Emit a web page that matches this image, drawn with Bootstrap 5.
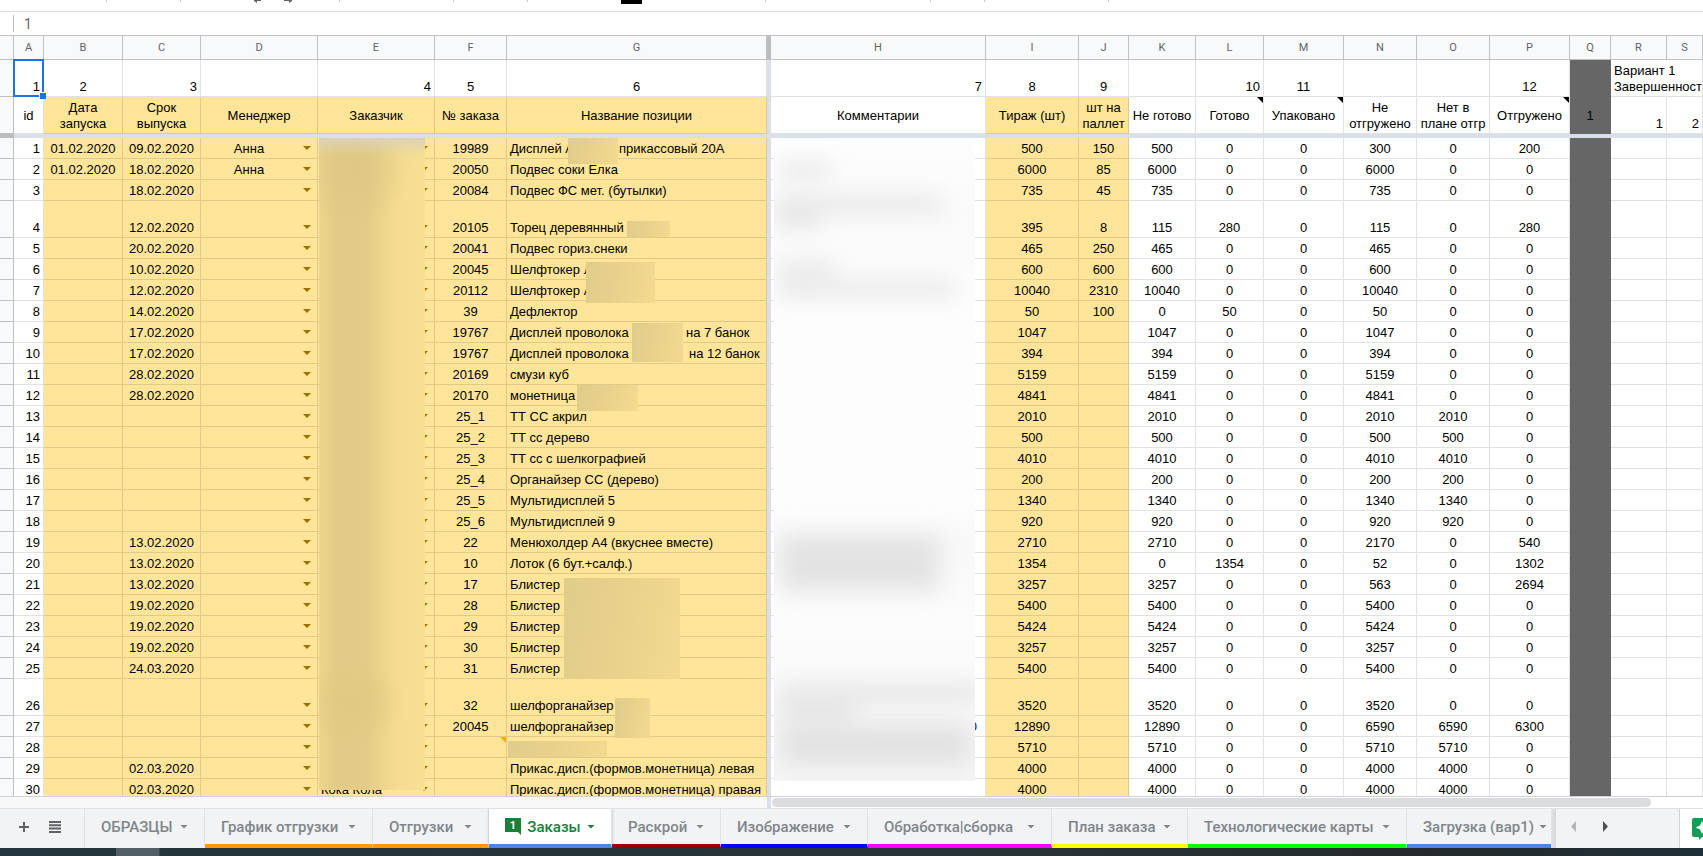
<!DOCTYPE html>
<html lang="ru">
<head>
<meta charset="utf-8">
<meta name="viewport" content="width=device-width, initial-scale=1">
<title>Заказы</title>
<link href="https://cdn.jsdelivr.net/npm/bootstrap@5.3.0/dist/css/bootstrap.min.css" rel="stylesheet">
<style>
  body { font: 13px/16px "Liberation Sans", Arial, sans-serif; color: #000; background: #fff; }
  button { font: inherit; color: inherit; background: none; border: 0; padding: 0; }

  .toolbar { height: 12px; border-bottom: 1px solid #dadce0; }
  .tool-group { flex: none; position: relative; }
  .tool-group::after { content: ""; position: absolute; right: 0; top: 0; width: 1px; height: 2px; background: #c8cbd0; }
  .text-swatch { width: 21px; height: 4px; background: #000; margin-left: 93px; }
  .formula-bar { height: 24px; border-bottom: 1px solid #c0c0c0; }
  .formula-bar input { border: 0; border-left: 1px solid #c0c0c0; height: 17px; margin-left: 13px; padding: 0 0 0 10px; outline: 0; font: 14px/16px Roboto, sans-serif; color: #666; }

  .grid-area { min-height: 0; border-bottom: 1px solid #cfd1d4; }
  .sheet { table-layout: fixed; border-collapse: separate; border-spacing: 0; width: 100%; }
  .sheet td, .sheet th { border-right: 1px solid #e1e1e1; border-bottom: 1px solid #e1e1e1; padding: 3px 3px 1px; vertical-align: bottom; text-align: center; font-weight: 400; height: 21px; white-space: nowrap; position: relative; }
  .sheet thead th { height: 24px; padding: 0; background: #f8f9fa; color: #5f6368; border-color: #c0c0c0; font: 11px/23px Roboto, sans-serif; vertical-align: middle; }
  .sheet .row-head { background: #f8f9fa; border-color: #c0c0c0; padding: 0; }
  .sheet tr.tall > * { height: 37px; }
  .sheet tr.titles td { vertical-align: middle; white-space: normal; }
  .sheet tr.titles td.to-end { vertical-align: bottom; }
  .sheet .to-end { text-align: right; }
  .sheet .to-start { text-align: left; }
  .sheet .due { padding-right: 6px; }
  .sheet .remark-tail { padding-right: 8px; color: #00006a; }
  .sheet .tint { background: #ffe599; border-color: #e0ca87; }
  .sheet .dark { background: #666; border-color: #666; }
  .sheet .over { overflow: visible; white-space: nowrap; border-right-color: #fff; }
  .sheet .gap { background: #dadfe8; border: 0; padding: 0; }
  .sheet thead .gap, .sheet .split .row-head { background: #bcbcbc; }
  .sheet thead .gap { border-bottom: 1px solid #c0c0c0; }
  .sheet .split > * { height: 4px; padding: 0; border: 0; background: #dadfe8; }
  .cell-menu { position: absolute; right: 6px; bottom: 8px; width: 8px; height: 4px; background: #997300; clip-path: polygon(0 0, 100% 0, 50% 100%); }
  .sheet .has-menu { padding-right: 23px; }
  .note::after { content: ""; position: absolute; right: 0; top: 0; border-top: 6px solid #000; border-left: 6px solid transparent; }
  .note-amber::after { border-top-color: #f9ab00; }
  .picked { position: absolute; inset: -1px -1px -1px -1px; border: 2px solid #1a73e8; z-index: 3; }
  .picked::after { content: ""; position: absolute; right: -4px; bottom: -4px; width: 7px; height: 7px; background: #1a73e8; border: 1px solid #fff; border-width: 1px 0 0 1px; }
  .piece { display: inline-block; vertical-align: bottom; }

  .veil { position: absolute; z-index: 2; background: linear-gradient(100deg, #e2cc8a, #e6d08b 40%, #f3da91); }
  .veil-client { left: 1px; top: 0; width: 106px; height: 652px; background:
    linear-gradient(180deg, #dcd2b4 0, transparent 18px),
    radial-gradient(ellipse 50px 40px at 34px 565px, #e0c983, transparent),
    radial-gradient(ellipse 54px 60px at 36px 30px, #dec884, transparent),
    linear-gradient(90deg, #ecd48c 0, #e2cb86 18px, #e3cc87 48px, #f4db91 76px, #f8df94 100%); }
  .veil-remark { left: 3px; top: 5px; width: 201px; height: 638px; overflow: hidden; background: linear-gradient(180deg, #fdfdfd, #fafafa 70px, #fdfdfd 190px, #fdfdfd 360px, #f8f8f8 400px, #fcfcfc 480px, #f5f5f5); }
  .veil-remark i { position: absolute; background: #dcdcdc; filter: blur(11px); opacity: .75; }

  .scroll-strip { height: 11px; flex: none; }
  .scroll-left { width: 767px; background: #f8f8f8; }
  .scroll-gap { width: 4px; background: #dadfe8; }
  .scroll-thumb { height: 9px; margin: 1px 52px 0 1px; border-radius: 5px; background: #dadce0; }

  .tab-bar { height: 40px; flex: none; background: #f1f3f4; border-top: 1px solid #e0e2e4; color: #80868b; font: 500 15px/20px Roboto, sans-serif; }
  .tab-tools { width: 85px; flex: none; border-right: 1px solid #e0e2e4; padding: 0 0 3px 18px; gap: 11px; color: #5f6368; }
  .sheet-tab { flex: none; padding: 0 16px; border-right: 1px solid #e0e2e4; border-bottom: 4px solid transparent; color: #80868b; text-decoration: none; white-space: nowrap; }
  .sheet-tab.current { background: #fff; color: #188038; box-shadow: 0 0 3px #bbb; }
  .tab-arrow { width: 8px; height: 4px; background: currentColor; clip-path: polygon(0 0, 100% 0, 50% 100%); }
  .tab-edge { width: 5px; background: linear-gradient(90deg, #e2e4e6, #d5d7d9); }
  .tab-scroll { gap: 22px; width: 124px; padding: 0 0 3px 15px; border-right: 1px solid #d0d2d4; }
  .explore { width: 23px; background: #fff; overflow: hidden; padding-left: 12px; }
  .taskbar { height: 8px; flex: none; background: linear-gradient(90deg, #24353d, #283338 60%, #252a2c 83%, #1f2f37); }
  .task-active { width: 44px; margin-left: 116px; background: #535f66; border-right: 1px solid #3c484e; }
</style>
</head>
<body class="vh-100 d-flex flex-column overflow-hidden">
  <div class="toolbar d-flex flex-shrink-0 overflow-hidden">
    <div class="tool-group" style="width:107px"></div>
    <div class="tool-group" style="width:74px"></div>
    <div class="tool-group" style="width:159px">
      <svg class="d-block" width="150" height="4" fill="#5f6368"><path d="M73 0h7v1h-4v2l-3-2zM103 0h8v1l-3 2V1h-5z"/></svg>
    </div>
    <div class="tool-group" style="width:114px"></div>
    <div class="tool-group" style="width:74px"></div>
    <div class="tool-group" style="width:238px"><div class="text-swatch"></div></div>
    <div class="tool-group" style="width:165px"></div>
    <div class="tool-group" style="width:54px"></div>
    <div class="tool-group" style="width:124px"></div>
  </div>
  <div class="formula-bar d-flex align-items-center flex-shrink-0">
    <input class="flex-grow-1" type="text" value="1" aria-label="Строка формул">
  </div>

  <main class="grid-area flex-grow-1 overflow-hidden">
    <table class="sheet">
      <colgroup id="cols"></colgroup>
      <thead><tr id="letters"></tr></thead>
      <tbody id="rows">
        <tr class="tall">
          <th class="row-head"></th><td class="to-end">1<span class="picked"></span></td><td>2</td><td class="to-end">3</td><td></td><td class="to-end">4</td><td>5</td><td>6</td><td class="gap"></td>
          <td class="to-end">7</td><td>8</td><td>9</td><td></td><td class="to-end">10</td><td>11</td><td></td><td></td><td>12</td><td class="dark"></td><td class="to-start over">Вариант 1<br>Завершенность</td><td></td>
        </tr>
        <tr class="tall titles">
          <th class="row-head"></th><td>id</td><td class="tint">Дата запуска</td><td class="tint">Срок выпуска</td><td class="tint">Менеджер</td><td class="tint">Заказчик</td><td class="tint">№ заказа</td><td class="tint">Название позиции</td><td class="gap"></td>
          <td>Комментарии</td><td class="tint">Тираж (шт)</td><td class="tint">шт на паллет</td><td class="text-nowrap">Не готово</td><td class="note">Готово</td><td class="note">Упаковано</td><td>Не отгружено</td><td>Нет в<br>плане отгр</td><td class="note">Отгружено</td><td class="dark">1</td><td class="to-end">1</td><td class="to-end">2</td>
        </tr>
        <tr class="split"><th class="row-head"></th><td colspan="20"></td></tr>
      </tbody>
    </table>
  </main>

  <div class="scroll-strip d-flex">
    <div class="scroll-left"></div><div class="scroll-gap"></div>
    <div class="flex-grow-1"><div class="scroll-thumb"></div></div>
  </div>

  <nav class="tab-bar d-flex" aria-label="Листы">
    <div class="tab-tools d-flex align-items-center">
      <button type="button" class="d-flex" aria-label="Добавить лист"><svg width="12" height="12" stroke="currentColor" stroke-width="2"><path d="M6 1v10M1 6h10"/></svg></button>
      <button type="button" class="d-flex ms-2" aria-label="Все листы"><svg width="12" height="12" stroke="currentColor" stroke-width="2"><path d="M0 1h12M0 4.300h12M0 7.600h12M0 11h12"/></svg></button>
    </div>
    <div id="tabs" class="d-flex flex-grow-1 overflow-hidden" style="width:0"></div>
    <div class="tab-edge"></div>
    <div class="tab-scroll d-flex align-items-center">
      <button type="button" class="d-flex" aria-label="Назад"><svg width="6" height="12" fill="#b4b7ba"><path d="M5 0v11L0 5.500z"/></svg></button>
      <button type="button" class="d-flex ms-1" aria-label="Вперёд"><svg width="6" height="12" fill="#4d5156"><path d="M0 0v11l5-5.500z"/></svg></button>
    </div>
    <button type="button" class="explore d-flex align-items-center" aria-label="Анализ данных"><svg class="flex-shrink-0" width="20" height="22" viewBox="0 0 20 22"><path fill="#0f9d58" d="M2 0h16q2 0 2 2v15q0 2-2 2h-8l-3 3v-3H2q-2 0-2-2V2q0-2 2-2z"/><path fill="#fff" d="M10 3l2 4.500 4.500 2-4.500 2-2 4.500-2-4.500-4.500-2 4.500-2z"/></svg></button>
  </nav>
  <footer class="taskbar d-flex"><div class="task-active"></div></footer>

<script src="https://cdn.jsdelivr.net/npm/bootstrap@5.3.0/dist/js/bootstrap.bundle.min.js"></script>
<script>
  const widths = [14,30,79,78,117,117,72,260,4,215,93,50,67,68,80,73,73,80,41,56];
  document.getElementById('cols').innerHTML =
    widths.map(w => `<col style="width:${w}px">`).join('') + '<col>';
  document.getElementById('letters').innerHTML =
    ['', ...'ABCDEFG', '|', ...'HIJKLMNOPQRS'].map(c => c === '|' ? '<th class="gap"></th>' : `<th>${c}</th>`).join('');

  // Blurred patch over part of a name: left, top, width, height inside its cell
  const veil = (x, y, w, h) => `<span class="veil" style="left:${x}px;top:${y}px;width:${w}px;height:${h}px"></span>`;
  const split = (w, a, b) => `<span class="piece" style="width:${w}px">${a}</span>${b}`;

  // start, due, manager, order no., name, run, per pallet, not ready, ready, packed, not shipped, not planned, shipped
  const data = [
    ['01.02.2020','09.02.2020','Анна','19989',split(109,'Дисплей А','прикассовый 20А')+veil(61,0,50,26),500,150,500,0,0,300,0,200],
    ['01.02.2020','18.02.2020','Анна','20050','Подвес соки Елка',6000,85,6000,0,0,6000,0,0],
    ['','18.02.2020','','20084','Подвес ФС мет. (бутылки)',735,45,735,0,0,735,0,0],
    ['','12.02.2020','','20105','Торец деревянный'+veil(120,20,43,16),395,8,115,280,0,115,0,280],
    ['','20.02.2020','','20041','Подвес гориз.снеки',465,250,465,0,0,465,0,0],
    ['','10.02.2020','','20045','Шелфтокер Л'+veil(79,3,69,41),600,600,600,0,0,600,0,0],
    ['','12.02.2020','','20112','Шелфтокер А',10040,2310,10040,0,0,10040,0,0],
    ['','14.02.2020','','39','Дефлектор',50,100,0,50,0,50,0,0],
    ['','17.02.2020','','19767',split(176,'Дисплей проволока','на 7 банок')+veil(125,1,51,39),1047,'',1047,0,0,1047,0,0],
    ['','17.02.2020','','19767',split(179,'Дисплей проволока','на 12 банок'),394,'',394,0,0,394,0,0],
    ['','28.02.2020','','20169','смузи куб',5159,'',5159,0,0,5159,0,0],
    ['','28.02.2020','','20170','монетница'+veil(70,0,61,26),4841,'',4841,0,0,4841,0,0],
    ['','','','25_1','ТТ СС акрил',2010,'',2010,0,0,2010,2010,0],
    ['','','','25_2','ТТ сс дерево',500,'',500,0,0,500,500,0],
    ['','','','25_3','ТТ сс с шелкографией',4010,'',4010,0,0,4010,4010,0],
    ['','','','25_4','Органайзер СС (дерево)',200,'',200,0,0,200,200,0],
    ['','','','25_5','Мультидисплей 5',1340,'',1340,0,0,1340,1340,0],
    ['','','','25_6','Мультидисплей 9',920,'',920,0,0,920,920,0],
    ['','13.02.2020','','22','Менюхолдер А4 (вкуснее вместе)',2710,'',2710,0,0,2170,0,540],
    ['','13.02.2020','','10','Лоток (6 бут.+салф.)',1354,'',0,1354,0,52,0,1302],
    ['','13.02.2020','','17','Блистер'+veil(57,4,116,101),3257,'',3257,0,0,563,0,2694],
    ['','19.02.2020','','28','Блистер',5400,'',5400,0,0,5400,0,0],
    ['','19.02.2020','','29','Блистер',5424,'',5424,0,0,5424,0,0],
    ['','19.02.2020','','30','Блистер',3257,'',3257,0,0,3257,0,0],
    ['','24.03.2020','','31','Блистер',5400,'',5400,0,0,5400,0,0],
    ['','','','32','шелфорганайзер'+veil(108,19,35,40),3520,'',3520,0,0,3520,0,0],
    ['','','','20045','шелфорганайзер',12890,'',12890,0,0,6590,6590,6300],
    ['','','','',veil(1,4,99,16),5710,'',5710,0,0,5710,5710,0],
    ['','02.03.2020','','','Прикас.дисп.(формов.монетница) левая',4000,'',4000,0,0,4000,4000,0],
    ['','02.03.2020','','','Прикас.дисп.(формов.монетница) правая',4000,'',4000,0,0,4000,4000,0]
  ];
  // Smudges in the remarks column: left, top, width, height
  const smudges = [[6,20,50,14],[4,54,164,14],[2,66,44,18],[4,120,58,14],[4,139,176,14],[6,392,160,56],[6,542,200,16],[6,558,76,20],[6,580,192,42]]
    .map(([x,y,w,h]) => `<i style="left:${x}px;top:${y}px;width:${w}px;height:${h}px"></i>`).join('');
  const menu = '<button type="button" class="cell-menu" aria-label="Выбрать"></button>';

  document.getElementById('rows').insertAdjacentHTML('beforeend', data.map((r, i) => {
    const first = i === 0, n = i + 1;
    return `<tr class="${n === 4 || n === 26 ? 'tall' : ''}"><th class="row-head"></th><td class="to-end">${n}</td>
      <td class="tint">${r[0]}</td><td class="tint to-end due">${r[1]}</td><td class="tint has-menu">${r[2]}${menu}</td>
      <td class="tint to-start">${n === 30 ? 'Кока Кола' : ''}${menu}${first ? '<span class="veil veil-client"></span>' : ''}</td>
      <td class="tint ${n === 28 ? 'note note-amber' : ''}">${r[3]}</td><td class="tint to-start">${r[4]}</td><td class="gap"></td>
      <td class="to-end remark-tail">${n === 27 ? '0' : ''}${first ? `<span class="veil veil-remark">${smudges}</span>` : ''}</td>
      <td class="tint">${r[5]}</td><td class="tint">${r[6]}</td>${r.slice(7).map(v => `<td>${v}</td>`).join('')}
      <td class="dark"></td><td></td><td></td></tr>`;
  }).join(''));

  const tabs = [['ОБРАЗЦЫ',120,''],['График отгрузки',168,'#ff9900'],['Отгрузки',116,'#ff9900'],['Заказы',123,'#4a86e8'],['Раскрой',109,'#990000'],
    ['Изображение',147,'#0000ff'],['Обработка|сборка',184,'#ff00ff'],['План заказа',136,'#ffff00'],['Технологические карты',219,'#00ff00'],['Загрузка (вар1)',157,'#4a86e8']];
  const badge = '<svg width="16" height="17"><path fill="#188038" d="M0 0h16v17l-3-3H0z"/><text x="8" y="11" text-anchor="middle" font-size="11" font-weight="700" fill="#fff">1</text></svg>';
  document.getElementById('tabs').innerHTML = tabs.map(([t, w, c]) =>
    `<a href="#" class="sheet-tab d-flex align-items-center justify-content-between ${t === 'Заказы' ? 'current' : ''}" style="width:${w}px;border-bottom-color:${c || 'transparent'}">${t === 'Заказы' ? badge : ''}<span>${t}</span><span class="tab-arrow"></span></a>`).join('');
</script>
</body>
</html>
